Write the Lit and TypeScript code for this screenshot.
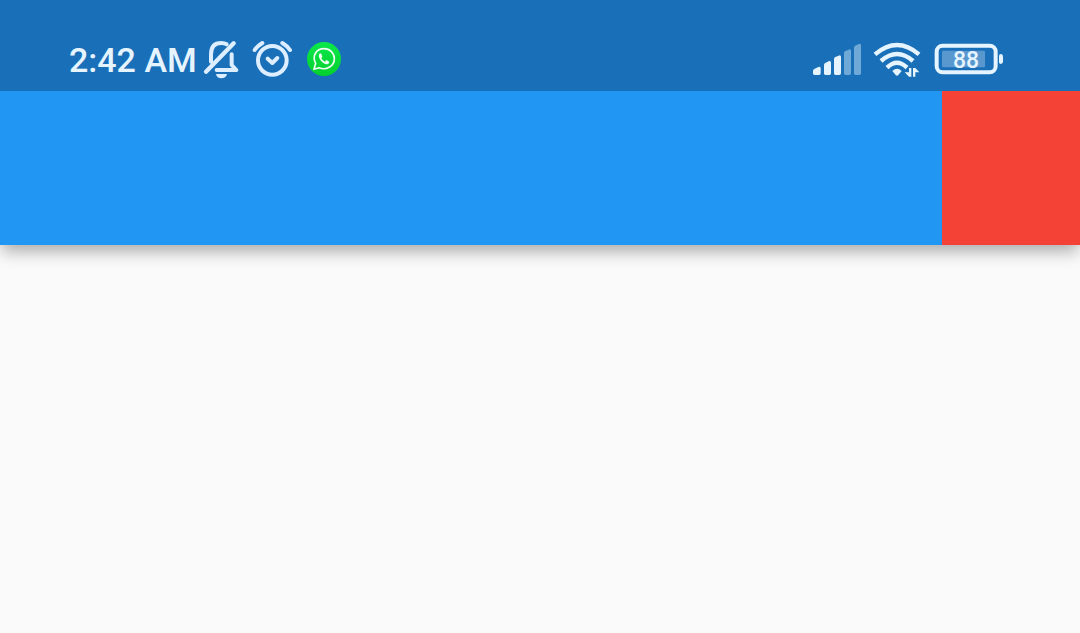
import { LitElement, html, css } from "lit";
import { customElement, property } from "lit/decorators.js";

@customElement("status-bar")
class StatusBar extends LitElement {
  @property() time = "2:42 AM";
  @property({ type: Number }) battery = 88;

  static styles = css`
    :host {
      display: flex;
      justify-content: space-between;
      align-items: center;
      padding: 35px 72px 6px 69px;
      background: #1a70b8;
      color: #e6f4ff;
      font-family: Roboto, sans-serif;
      font-weight: 500;
    }
    .group {
      display: flex;
      align-items: center;
    }
    .time {
      margin-right: 1px;
      font-size: 34px;
      line-height: 50px;
      white-space: nowrap;
    }
    svg {
      display: block;
      height: 50px;
      fill: none;
      stroke-linecap: round;
      stroke-linejoin: round;
    }
    .square {
      width: 50px;
    }
    .wide {
      width: 60px;
    }
    .chat {
      margin-left: 2px;
    }
    .battery {
      display: grid;
      width: 80px;
    }
    .battery > * {
      grid-area: 1 / 1;
    }
    .level {
      align-self: end;
      padding-right: 4px;
      font-size: 23px;
      line-height: 48px;
      text-align: center;
    }
  `;

  render() {
    return html`
      <div class="group">
        <span class="time">${this.time}</span>
        <svg class="square" viewBox="0 0 150 150" stroke="#dceeff" stroke-width="12" aria-hidden="true">
          <path d="M39 80V58C39 36 50 24 70 24C76 24 81 25 86 28" />
          <path d="M101 58V90L115 105H56" />
          <path d="M107 25L24 110" stroke-width="13" />
          <path d="M54 117H87C85 126 79 130 70 130S56 126 54 117Z" fill="#dceeff" stroke="none" />
        </svg>
        <svg class="square" viewBox="0 0 150 150" stroke="#dceeff" stroke-width="12" aria-hidden="true">
          <circle cx="73" cy="76" r="43" />
          <path d="M59 71L73 84L88 69" />
          <path d="M20 45Q28 33 43 24M103 24Q118 33 126 45" />
        </svg>
        <svg class="square chat" viewBox="0 0 150 150" aria-hidden="true">
          <defs>
            <linearGradient id="green" x1="0" y1="0" x2="0" y2="1">
              <stop offset="0" stop-color="#0ce84c" />
              <stop offset="1" stop-color="#04d02c" />
            </linearGradient>
          </defs>
          <circle cx="72" cy="72" r="51" fill="url(#green)" />
          <path d="M42 103L47 85C35 63 49 41 72 41C90 41 103 54 103 71C103 92 80 108 57 98Z" stroke="#f0fff4" stroke-width="5" />
          <path d="M61 55C57 56 55 62 58 69C62 78 70 86 79 88C84 88 88 85 88 80L79 75L75 80C70 78 66 74 64 69L67 65L64 56Z" fill="#f0fff4" />
        </svg>
      </div>
      <div class="group">
        <svg class="wide" viewBox="0 0 180 150" aria-hidden="true">
          <g fill="#e6f4ff">
            <path d="M15 115V108Q15 104 19 102L31 96Q38 93 38 100V115Q38 120 33 120H20Q15 120 15 115Z" />
            <path d="M48 115V90Q48 86 52 84L62 79Q69 76 69 83V115Q69 120 64 120H53Q48 120 48 115Z" />
            <path d="M78 115V72Q78 68 82 66L92 62Q99 59 99 66V115Q99 120 94 120H83Q78 120 78 115Z" />
          </g>
          <g fill="#6fa9d7">
            <path d="M108 115V54Q108 50 112 48L122 44Q129 41 129 48V115Q129 120 124 120H113Q108 120 108 115Z" />
            <path d="M138 115V38Q138 34 142 32L152 27Q159 24 159 31V115Q159 120 154 120H143Q138 120 138 115Z" />
          </g>
        </svg>
        <svg class="wide" viewBox="0 0 180 150" stroke="#e6f4ff" stroke-width="13" aria-hidden="true">
          <g stroke-linecap="butt">
            <path d="M21 58Q87 2 153 58" />
            <path d="M39 78Q87 36 135 78" />
            <path d="M57 98Q87 69 117 98" />
          </g>
          <path d="M73 108Q87 95 101 108L91 120Q87 124 83 120Z" fill="#e6f4ff" stroke="none" />
          <path d="M123 99H130V125H123L110 112H123ZM135 125V99H142L154 112H142V125Z" fill="#e6f4ff" stroke="none" />
        </svg>
        <div class="battery">
          <svg viewBox="0 0 240 150" aria-hidden="true">
            <rect x="26" y="32" width="177" height="80" rx="18" stroke="#e6f4ff" stroke-width="12" />
            <rect x="42" y="47" width=${Math.round(this.battery * 1.47)} height="50" rx="4" fill="#5998cf" />
            <path d="M213 62Q213 57 219 57Q225 57 225 65V79Q225 87 219 87Q213 87 213 82Z" fill="#e6f4ff" />
          </svg>
          <span class="level">${this.battery}</span>
        </div>
      </div>
    `;
  }
}

@customElement("app-root")
class AppRoot extends LitElement {
  static styles = css`
    :host {
      display: block;
      min-height: 100vh;
      background: #fafafa;
    }
    .app-bar {
      box-shadow: 0 8px 16px -2px rgba(0, 0, 0, 0.33);
    }
    .toolbar {
      display: flex;
      height: 154px;
      background: #2196f3;
    }
    .action {
      width: 138px;
      margin-left: auto;
      background: #f44336;
    }
  `;

  render() {
    return html`
      <header class="app-bar">
        <status-bar></status-bar>
        <div class="toolbar"><div class="action"></div></div>
      </header>
      <main></main>
    `;
  }
}
